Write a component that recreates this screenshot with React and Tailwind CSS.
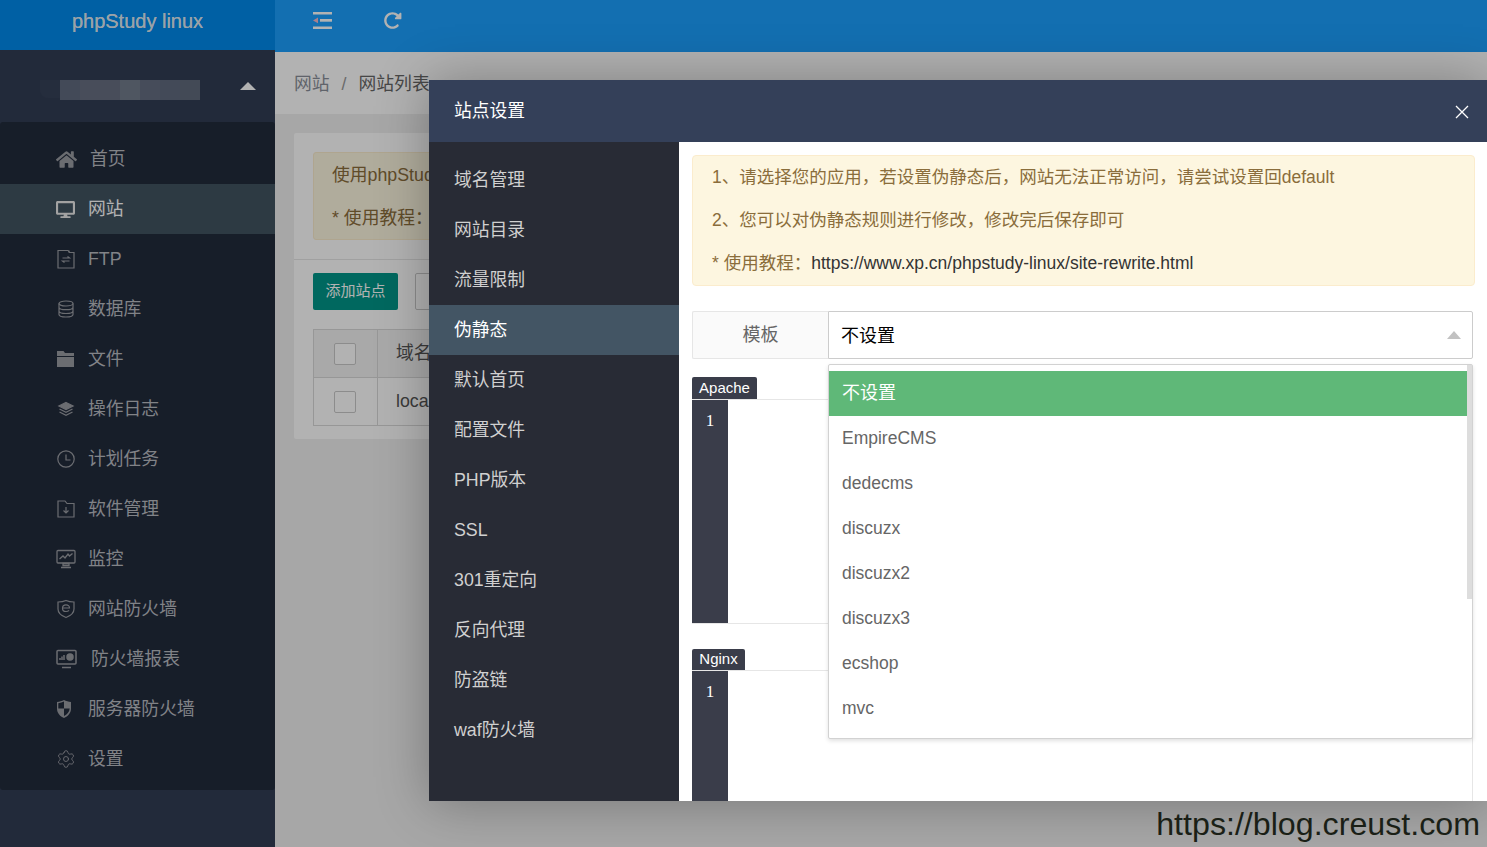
import React from "react";
import { FaHome, FaDesktop } from "react-icons/fa";
import { FaRotateRight } from "react-icons/fa6";
import { Settings } from "lucide-react";

const I = ({ children, w = 20, h = 20, vb = "0 0 20 20" }) => (
  <svg width={w} height={h} viewBox={vb} fill="none" stroke="currentColor" strokeWidth="1.2">{children}</svg>
);

const FtpIcon = () => (
  <I><path d="M2 1.500h10l1.500 2h4.500v15.500H2z" /><path d="M13 1.500v2" /><path d="M6.500 9h7l-2-1.500M13.500 12h-7l2 1.500" /></I>
);
const DbIcon = () => (
  <I><ellipse cx="10" cy="4.500" rx="7" ry="2.500" /><path d="M3 4.500v11c0 1.500 3 2.500 7 2.500s7-1 7-2.500v-11M3 8.200c0 1.500 3 2.500 7 2.500s7-1 7-2.500M3 12c0 1.500 3 2.500 7 2.500s7-1 7-2.500" /></I>
);
const FolderSolid = () => (
  <svg width="19" height="18" viewBox="0 0 19 18" fill="currentColor">
    <path d="M1 1h6.500L9 3h9v3H1zM1 7h17v10H1z" />
  </svg>
);
const LayersIcon = () => (
  <svg width="20" height="20" viewBox="0 0 20 20" fill="none" stroke="currentColor" strokeWidth="1.300">
    <path d="M10 3.500 17 7l-7 3.500L3 7z" fill="currentColor" />
    <path d="M3.500 10 10 13.300 16.500 10M3.500 13 10 16.300 16.500 13" />
  </svg>
);
const ClockIcon = () => (
  <I><circle cx="10" cy="10" r="8.200" /><path d="M10 5.500V11h4.500" /></I>
);
const FolderDown = () => (
  <I><path d="M2 2h7l2 2.500h7V18H2z" /><path d="M10 8v6M7.500 11.500 10 14l2.500-2.500" /></I>
);
const MonitorChart = () => (
  <svg width="20" height="20" viewBox="0 0 20 20" fill="none" stroke="currentColor" strokeWidth="1.300">
    <rect x="1" y="1.500" width="18" height="12.500" rx="1" />
    <path d="M3.500 10 7 7l2 2 3-4 1.500 2L16.500 4.500M5 18.500h10M7 14.500h6v2H7z" />
  </svg>
);
const ShieldE = () => (
  <I><path d="M2 3c3 0 6-.6 8-1.500 2 .9 5 1.500 8 1.500v7c0 4-4 7-8 8.500-4-1.500-8-4.500-8-8.500z" /><path d="M6.500 9h7c0-2-1.500-3.200-3.500-3.200S6.500 7.300 6.500 9.200s1.500 3.300 3.500 3.300c1.300 0 2.300-.4 3-1.200" /></I>
);
const MonitorReport = () => (
  <svg width="21" height="20" viewBox="0 0 21 20" fill="none" stroke="currentColor" strokeWidth="1.500">
    <rect x="1" y="1.500" width="19" height="13.500" rx="1" />
    <path d="M4 11V9M6 11V7.500M8 11V6M6 18.500h9" />
    <circle cx="14" cy="8" r="3" fill="currentColor" />
  </svg>
);
const ShieldHalf = () => (
  <svg width="16" height="20" viewBox="0 0 16 20">
    <path d="M8 1c2 1 4.500 1.800 7 2v6.500c0 4.500-3 7.800-7 9.500-4-1.700-7-5-7-9.500V3c2.500-.2 5-1 7-2z" fill="currentColor" />
    <path d="M8 2.500v7H2.300V4.200C4.300 4 6.300 3.400 8 2.500zM8 9.500h5.700c-.3 3.400-2.600 6-5.700 7.600z" fill="#222b3c" />
  </svg>
);

const menu = [
  ["首页", <FaHome size={21} />, 90],
  ["网站", <FaDesktop size={19} />, 88, true],
  ["FTP", <FtpIcon />, 88],
  ["数据库", <DbIcon />, 88],
  ["文件", <FolderSolid />, 88],
  ["操作日志", <LayersIcon />, 88],
  ["计划任务", <ClockIcon />, 88],
  ["软件管理", <FolderDown />, 88],
  ["监控", <MonitorChart />, 88],
  ["网站防火墙", <ShieldE />, 88],
  ["防火墙报表", <MonitorReport />, 91],
  ["服务器防火墙", <ShieldHalf />, 88],
  ["设置", <Settings size={20} strokeWidth={1.1} />, 88],
];

const navs = ["域名管理", "网站目录", "流量限制", "伪静态", "默认首页", "配置文件", "PHP版本", "SSL", "301重定向", "反向代理", "防盗链", "waf防火墙"];
const options = ["EmpireCMS", "dedecms", "discuzx", "discuzx2", "discuzx3", "ecshop", "mvc"];
const blur = ["bg-[#616b7e]", "bg-[#676f82]", "bg-[#676f82]", "bg-[#727b8c]", "bg-[#656e81]", "bg-[#616a7e]", "bg-[#606a7c]"];

export default function App() {
  return (
    <div className="relative flex h-[847px] w-[1487px] overflow-hidden bg-[#e8e8e8] font-['Liberation_Sans','Noto_Sans_CJK_SC',sans-serif]">
      {/* 侧栏 */}
      <aside className="flex w-[275px] shrink-0 flex-col bg-[#323d54]">
        <div className="flex h-[50px] shrink-0 items-start justify-center bg-[#008aeb] pt-[8px] text-[20px] leading-[26px] text-[#dde8f0] [text-shadow:0_0_0.5px_#dde8f0]">
          phpStudy linux
        </div>
        <div className="flex h-[72px] shrink-0 items-start pl-[40px] pr-[19px] pt-[30px]">
          <div className="h-[18px] w-[20px] rounded-bl-[8px] bg-[#364158]" />
          <div className="flex h-[20px] w-[140px]">
            {blur.map((c, i) => (
              <div key={i} className={`h-[20px] w-[20px] ${c}`} />
            ))}
          </div>
          <div className="ml-auto mt-[2px] h-0 w-0 border-x-[8px] border-b-[8px] border-x-transparent border-b-white" />
        </div>
        <nav className="rounded-[3px] bg-[#222b3c] pb-[6px] pt-[12px]">
          {menu.map(([t, icon, x, active]) => (
            <div key={t} className={`flex h-[50px] items-center text-[17.8px] ${active ? "bg-[#415361] text-white" : "text-[#b9bcc2]"}`}>
              <span className="flex w-[56px] shrink-0" />
              <span className={`flex w-[21px] shrink-0 items-center ${active ? "text-[#e8e8e8]" : "text-[#9a9da3]"}`}>{icon}</span>
              <span className={x === 90 ? "ml-[13px]" : x === 91 ? "ml-[14px]" : "ml-[11px]"}>{t}</span>
            </div>
          ))}
        </nav>
      </aside>

      {/* 主内容 */}
      <main className="flex min-w-0 flex-1 flex-col">
        <header className="flex h-[52px] shrink-0 items-start gap-[50px] bg-[#1c9ffe] pl-[37px] pt-[11px] text-white">
          <svg width="21" height="20" viewBox="0 0 21 20" fill="currentColor">
            <rect x="1" y="1" width="19" height="2.500" />
            <rect x="8" y="8" width="12" height="2.700" />
            <rect x="1" y="15.500" width="19" height="2.500" />
            <path d="M1 9.400 6 6.500v5.800z" fill="#f4b8c8" />
          </svg>
          <FaRotateRight size={19} />
        </header>
        <div className="flex h-[62px] shrink-0 items-center bg-white pl-[19px] pt-[3px] text-[17.8px]">
          <span className="text-[#8a8f99]">网站</span>
          <span className="mx-[12px] text-[#999]">/</span>
          <span className="whitespace-nowrap text-[#666]">网站列表</span>
        </div>
        <div className="flex-1 bg-[#efefef] px-[19px] pt-[19px]">
          <section className="h-[306px] w-[600px] rounded-[2px] bg-white">
            <div className="px-[19px] pt-[19px]">
              <div className="h-[88px] rounded-[3px] border border-[#fbeccd] bg-[#fdf6e0] px-[18px] pt-[10px] text-[17.8px] leading-[24px] text-[#8a6d3b]">
                <p className="whitespace-nowrap">使用phpStudy</p>
                <p className="mt-[19px] whitespace-nowrap">* 使用教程：</p>
              </div>
            </div>
            <div className="mt-[19px] flex items-start gap-[17px] border-t border-[#e6e6e6] px-[19px] pt-[13px]">
              <button className="h-[37px] w-[85px] rounded-[2px] bg-[#009688] text-[15px] text-white">添加站点</button>
              <div className="h-[37px] w-[85px] rounded-[2px] border border-[#c9c9c9]" />
            </div>
            <div className="mx-[19px] mt-[19px] border border-[#d8d8d8] text-[17.8px] text-[#555]">
              <div className="flex h-[47px] bg-[#f2f2f2]">
                <div className="flex w-[64px] items-center justify-center border-r border-[#d8d8d8] pr-[1px]">
                  <div className="h-[22px] w-[22px] rounded-[2px] border border-[#c9c9c9] bg-white" />
                </div>
                <div className="flex items-center pl-[18px]">域名</div>
              </div>
              <div className="flex h-[48px] border-t border-[#d8d8d8]">
                <div className="flex w-[64px] items-center justify-center border-r border-[#d8d8d8] pr-[1px]">
                  <div className="h-[22px] w-[22px] rounded-[2px] border border-[#c9c9c9] bg-white" />
                </div>
                <div className="flex items-center pl-[18px]">local</div>
              </div>
            </div>
          </section>
        </div>
      </main>

      {/* 遮罩 */}
      <div className="absolute inset-0 bg-black/30" />

      {/* 弹窗 */}
      <div className="absolute left-[429px] top-[80px] flex h-[721px] w-[1058px] flex-col bg-white shadow-[1px_1px_50px_rgba(0,0,0,0.3)]">
        <div className="flex h-[62px] shrink-0 items-center justify-between bg-[#344059] pl-[25px] pr-[18px] text-[17.8px] text-white">
          <span>站点设置</span>
          <svg className="mt-[2px]" width="14" height="14" viewBox="0 0 14 14" stroke="currentColor" strokeWidth="1.300"><path d="M1 1l12 12M13 1 1 13" /></svg>
        </div>
        <div className="flex min-h-0 flex-1">
          <div className="w-[250px] shrink-0 bg-[#282b35] pt-[13px] text-[17.8px] text-[#d0d0d0]">
            {navs.map((n) => (
              <div key={n} className={`flex h-[50px] items-center pl-[25px] ${n === "伪静态" ? "bg-[#435564] text-white" : ""}`}>{n}</div>
            ))}
          </div>
          <div className="relative min-w-0 flex-1 overflow-hidden pl-[13px] pr-[12px] pt-[13px]">
            <div className="h-[131px] rounded-[4px] border border-[#fbeccd] bg-[#fdf6e0] pl-[19px] text-[17.5px] leading-[43px] text-[#8a6d3b]">
              <p>1、请选择您的应用，若设置伪静态后，网站无法正常访问，请尝试设置回default</p>
              <p>2、您可以对伪静态规则进行修改，修改完后保存即可</p>
              <p>* 使用教程：<span className="text-[#333]">https://www.xp.cn/phpstudy-linux/site-rewrite.html</span></p>
            </div>

            <div className="mt-[25px] flex h-[48px] w-[781px]">
              <div className="flex w-[136px] items-center justify-center rounded-l-[2px] border border-r-0 border-[#e6e6e6] bg-[#fafafa] text-[18px] text-[#666]">模板</div>
              <div className="flex flex-1 items-center justify-between rounded-r-[2px] border border-[#cccccc] bg-white pl-[12px] pr-[11px] text-[18px] text-black">
                <span className="pt-[2px]">不设置</span>
                <span className="h-0 w-0 border-x-[7px] border-b-[8px] border-x-transparent border-b-[#c2c2c2]" />
              </div>
            </div>

            <div className="mt-[18px] w-[781px]">
              <div className="flex h-[22px] w-[65px] items-center justify-center rounded-t-[2px] bg-[#3a3d4a] text-[15px] text-white">Apache</div>
              <div className="flex h-[225px] border-y border-r border-[#e6e6e6]">
                <div className="w-[36px] bg-[#3a3d4a] pt-[10px] text-center font-['Liberation_Serif',serif] text-[17px] leading-[22px] text-white">1</div>
              </div>
            </div>

            <div className="mt-[25px] w-[781px]">
              <div className="flex h-[21px] w-[53px] items-center justify-center rounded-t-[2px] bg-[#3a3d4a] text-[15px] text-white">Nginx</div>
              <div className="flex h-[131px] border-r border-t border-[#e6e6e6]">
                <div className="w-[36px] bg-[#3a3d4a] pt-[10px] text-center font-['Liberation_Serif',serif] text-[17px] leading-[22px] text-white">1</div>
              </div>
            </div>

            {/* 下拉 */}
            <div className="absolute left-[149px] top-[222px] h-[375px] w-[645px] rounded-[2px] border border-[#d2d2d2] bg-white pt-[6px] text-[17.5px] text-[#666] shadow-[0_2px_4px_rgba(0,0,0,0.12)]">
              <div className="flex h-[45px] w-[638px] items-center bg-[#5fb878] pl-[13px] text-[18px] text-white">不设置</div>
              {options.map((o) => (
                <div key={o} className="flex h-[45px] items-center pl-[13px]">{o}</div>
              ))}
              <div className="absolute right-0 top-0 h-[234px] w-[5px] bg-[#dddddd]" />
            </div>
          </div>
        </div>
      </div>

      {/* 水印 */}
      <div className="absolute bottom-[2px] right-[7px] text-[32.2px] leading-[41px] text-[#1a1f16]">https://blog.creust.com</div>
    </div>
  );
}
